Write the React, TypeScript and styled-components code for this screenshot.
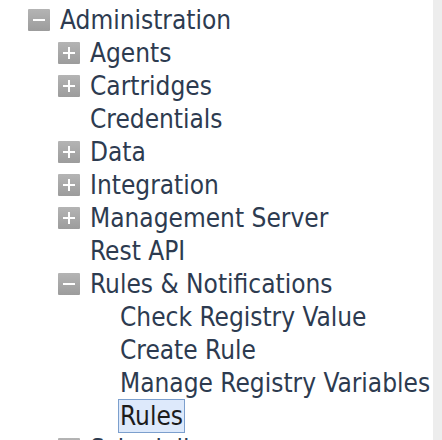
import React from "react";
import styled, { createGlobalStyle } from "styled-components";

const Global = createGlobalStyle`
  html, body { margin: 0; padding: 0; background: #ffffff; overflow: hidden; }
`;

const Page = styled.div`
  display: flex;
  width: 442px;
  height: 440px;
  overflow: hidden;
  background: #ffffff;
`;

const Tree = styled.ul`
  flex: 1;
  list-style: none;
  margin: 0;
  padding: 3px 0 0 28px;
  font-family: "DejaVu Sans Condensed", "DejaVu Sans", sans-serif;
  font-size: 26px;
  color: #2d3b50;
  overflow: hidden;
`;

const Track = styled.div`
  width: 9px;
  height: 440px;
  background: #ededed;
`;

const Row = styled.li<{ level: number }>`
  display: flex;
  align-items: center;
  height: 33px;
  padding-left: ${(p) => p.level * 30}px;
  white-space: nowrap;
`;

const Toggle = styled.span<{ open: boolean }>`
  position: relative;
  flex: none;
  width: 22px;
  height: 22px;
  margin-right: 10px;
  border-radius: 1px;
  background: linear-gradient(#b4b4b4, #9c9c9c);
  &::before,
  &::after {
    content: "";
    position: absolute;
    background: #ffffff;
  }
  &::before {
    left: 5px;
    top: 10px;
    width: 12px;
    height: 2px;
  }
  &::after {
    display: ${(p) => (p.open ? "none" : "block")};
    left: 10px;
    top: 5px;
    width: 2px;
    height: 12px;
  }
`;

const Spacer = styled.span`
  flex: none;
  width: 32px;
`;

const Label = styled.span<{ selected?: boolean }>`
  line-height: 32px;
  padding: 0 1px;
  margin-left: -2px;
  border: 1px solid ${(p) => (p.selected ? "#7c9fcd" : "transparent")};
  background: ${(p) => (p.selected ? "#dde9fb" : "transparent")};
  color: ${(p) => (p.selected ? "#1c1c1c" : "inherit")};
`;

type Node = { label: string; level: number; state?: "open" | "closed"; selected?: boolean };

const nodes: Node[] = [
  { label: "Administration", level: 0, state: "open" },
  { label: "Agents", level: 1, state: "closed" },
  { label: "Cartridges", level: 1, state: "closed" },
  { label: "Credentials", level: 1 },
  { label: "Data", level: 1, state: "closed" },
  { label: "Integration", level: 1, state: "closed" },
  { label: "Management Server", level: 1, state: "closed" },
  { label: "Rest API", level: 1 },
  { label: "Rules & Notifications", level: 1, state: "open" },
  { label: "Check Registry Value", level: 2 },
  { label: "Create Rule", level: 2 },
  { label: "Manage Registry Variables", level: 2 },
  { label: "Rules", level: 2, selected: true },
  { label: "Scheduling", level: 1, state: "open" },
];

export default function App() {
  return (
    <Page>
      <Global />
      <Tree>
        {nodes.map((n) => (
          <Row key={n.label} level={n.level}>
            {n.state ? <Toggle open={n.state === "open"} /> : <Spacer />}
            <Label selected={n.selected}>{n.label}</Label>
          </Row>
        ))}
      </Tree>
      <Track />
    </Page>
  );
}
